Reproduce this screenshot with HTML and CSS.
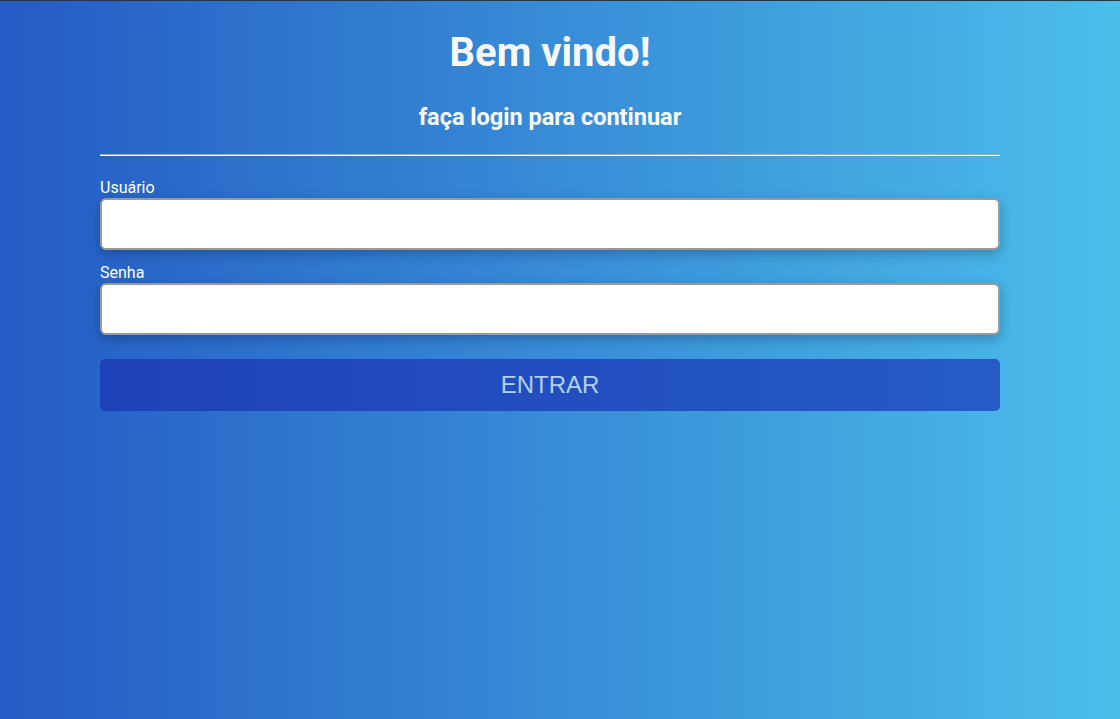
FILE: index.html
```html
<!DOCTYPE html>
<html lang="pt-BR">
<head>
<meta charset="utf-8">
<title>Login</title>
<link rel="stylesheet" href="styles.css">
</head>
<body>
<main class="page">
  <div class="container">
    <h1 class="title">Bem vindo!</h1>
    <h2 class="subtitle">faça login para continuar</h2>
    <hr class="divider">
    <form class="form">
      <label class="field">
        <span class="label">Usuário</span>
        <input class="input" type="text">
      </label>
      <label class="field">
        <span class="label">Senha</span>
        <input class="input" type="password">
      </label>
      <button class="button" type="button">ENTRAR</button>
    </form>
  </div>
</main>
</body>
</html>
```

FILE: styles.css
```css
html, body {
  margin: 0;
  padding: 0;
  height: 100%;
}
body {
  font-family: Roboto, "Liberation Sans", sans-serif;
  color: #fff;
}
.page {
  box-sizing: border-box;
  min-height: 100%;
  border-top: 1px solid #333;
  background: linear-gradient(to right, #245bc4 0%, #4bbeea 100%);
  display: flex;
  justify-content: center;
  padding-right: 20px;
}
.container {
  width: 900px;
  display: flex;
  flex-direction: column;
}
.title {
  margin: 28px 0 0;
  font-size: 40px;
  line-height: 47px;
  font-weight: 700;
  text-align: center;
  color: #f8f8fa;
}
.subtitle {
  margin: 28px 0 0;
  font-size: 23.5px;
  line-height: 27px;
  font-weight: 700;
  text-align: center;
}
.divider {
  margin: 23px 0 0;
  border: 0;
  height: 0;
  border-top: 1px solid #a9a9a9;
  border-bottom: 1px solid #fff;
}
.form {
  display: flex;
  flex-direction: column;
  margin-top: 22px;
}
.field {
  display: flex;
  flex-direction: column;
  margin-bottom: 13px;
}
.label {
  font-size: 16px;
  line-height: 20px;
}
.input {
  box-sizing: border-box;
  height: 52px;
  border: 2px solid #9a9a9a;
  border-radius: 6px;
  background: #fff;
  box-shadow: 0 4px 12px rgba(0, 0, 40, 0.25);
  outline: none;
  font-size: 16px;
  padding: 0 10px;
  margin: 0;
}
.field + .field { margin-bottom: 0; }
.button {
  margin-top: 24px;
  height: 52px;
  border: 0;
  border-radius: 5px;
  background: linear-gradient(to right, #1e41b9 0%, #265bc5 100%);
  color: #b1d0f4;
  font-family: "Liberation Sans", Arial, sans-serif;
  font-size: 24px;
  cursor: pointer;
}
```
